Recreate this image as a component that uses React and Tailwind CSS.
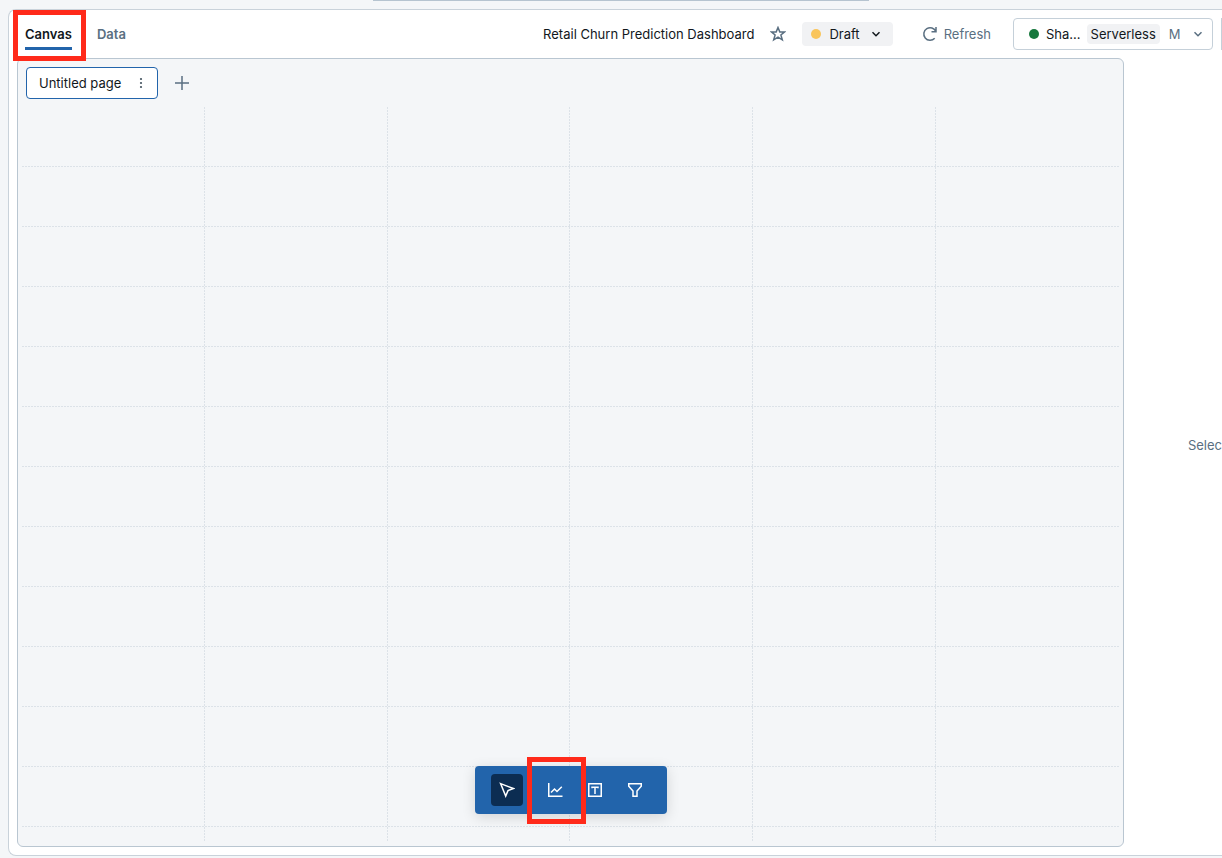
const columns = [0, 1, 2, 3, 4];
const rows = [0, 1, 2, 3, 4, 5, 6, 7, 8, 9, 10, 11];

function ChevronIcon() {
  return (
    <svg width="16" height="16" viewBox="0 0 16 16" fill="none" stroke="currentColor" strokeWidth="1.5" aria-hidden="true">
      <path d="M4.5 6.3 8 9.8l3.5-3.5" />
    </svg>
  );
}

function StarIcon() {
  return (
    <svg width="16" height="16" viewBox="0 0 16 16" fill="none" stroke="currentColor" strokeWidth="1.5" aria-hidden="true">
      <path d="M8 1.5 9.8 5.9h4.8l-3.7 3.1 1.4 4.9L8 11.1l-4.3 2.8 1.4-4.9-3.7-3.1h4.8z" />
    </svg>
  );
}

function RefreshIcon() {
  return (
    <svg width="16" height="16" viewBox="0 0 16 16" fill="none" stroke="currentColor" strokeWidth="1.5" aria-hidden="true">
      <path d="M14 1v4.8H9.5M13.9 5.5A6.3 6.3 0 1 0 12.7 12.3" />
    </svg>
  );
}

function CursorIcon() {
  return (
    <svg width="16" height="16" viewBox="0 0 16 16" fill="none" stroke="currentColor" strokeWidth="1.5" aria-hidden="true">
      <path d="M1.6 1.6 14.4 6.5 9 8.6 6.7 14z" />
    </svg>
  );
}

function ChartIcon() {
  return (
    <svg width="16" height="16" viewBox="0 0 16 16" fill="none" stroke="currentColor" strokeWidth="1.5" aria-hidden="true">
      <path d="M1.75 1v13.25H15.5M4 10.5 7.5 7l2.5 2.5 4.8-4.8" />
    </svg>
  );
}

function TextBoxIcon() {
  return (
    <svg width="16" height="16" viewBox="0 0 16 16" fill="none" stroke="currentColor" strokeWidth="1.5" aria-hidden="true">
      <path d="M1.75 1.75h12.5v12.5H1.75zM5 6.3V5.25h6V6.3M8 5.25V12" />
    </svg>
  );
}

function FilterIcon() {
  return (
    <svg width="16" height="16" viewBox="0 0 16 16" fill="none" stroke="currentColor" strokeWidth="1.5" aria-hidden="true">
      <path d="M1.75 1.75h12.5v2.5L10 9v5.25H6V9L1.75 4.25z" />
    </svg>
  );
}

function Header() {
  return (
    <header className="flex h-12 shrink-0 items-center pl-4">
      <nav className="relative z-10 flex gap-[25px] font-semibold">
        <a href="#canvas" className="border-b-3 border-[#2264ab] pt-[6px] pb-[3px] text-[#11171c]">Canvas</a>
        <a href="#data" className="pt-[6px] text-[#5a6f81]">Data</a>
        <span className="pointer-events-none absolute -top-2 -left-3 h-[51px] w-[73px] border-5 border-[#ff2a1a]" />
      </nav>
      <div className="ml-auto flex shrink-0 items-center">
        <h1 className="text-[#11171c]">Retail Churn Prediction Dashboard</h1>
        <button type="button" aria-label="Favorite" className="ml-4 text-[#5a6f81]"><StarIcon /></button>
        <button type="button" className="ml-4 flex h-6 items-center rounded bg-[#f1f2f4] px-[9px] text-[#11171c]">
          <span className="mr-2 size-[10px] rounded-full bg-[#f9c55c]" />
          Draft
          <span className="ml-2"><ChevronIcon /></span>
        </button>
        <button type="button" className="ml-[29px] flex items-center gap-[6px] text-[#5a6f81]">
          <RefreshIcon />
          Refresh
        </button>
        <button type="button" className="ml-[22px] flex h-8 w-[200px] items-center rounded border border-[#c5d0d9] pl-[15px] text-[#11171c]">
          <span className="mr-[7px] size-[10px] rounded-full bg-[#17783d]" />
          Sha...
          <span className="ml-[6px] rounded bg-[#f1f2f4] px-1 leading-5">Serverless</span>
          <span className="ml-[9px] text-[#5a6f81]">M</span>
          <span className="mr-[6px] ml-auto text-[#5a6f81]"><ChevronIcon /></span>
        </button>
        <span className="ml-2 h-8 w-px bg-[#c5d0d9]" />
      </div>
    </header>
  );
}

function PageTabs() {
  return (
    <div className="flex items-center gap-4 pt-2 pl-2">
      <div className="flex h-8 w-[132px] items-center justify-between rounded border border-[#2264ab] bg-white pr-2 pl-3 text-[#11171c]">
        <button type="button">Untitled page</button>
        <button type="button" aria-label="Page options" className="text-[#44535f]">
          <svg width="16" height="16" viewBox="0 0 16 16" fill="currentColor" aria-hidden="true">
            <circle cx="8" cy="4" r="1.1" />
            <circle cx="8" cy="8" r="1.1" />
            <circle cx="8" cy="12" r="1.1" />
          </svg>
        </button>
      </div>
      <button type="button" aria-label="Add page" className="text-[#5a6f81]">
        <svg width="16" height="16" viewBox="0 0 16 16" fill="none" stroke="currentColor" strokeWidth="1.5" aria-hidden="true">
          <path d="M8 1v14M1 8h14" />
        </svg>
      </button>
    </div>
  );
}

function Toolbar() {
  return (
    <div className="absolute bottom-8 left-1/2 flex h-12 w-48 -translate-x-1/2 items-center rounded bg-[#2264ab] pl-4 text-white shadow-[0_3px_14px_rgba(0,0,0,0.14)]">
      <button type="button" aria-label="Select" className="flex size-8 items-center justify-center rounded bg-[#0c2d52]"><CursorIcon /></button>
      <button type="button" aria-label="Add visualization" className="relative ml-4 flex size-8 items-center justify-center">
        <ChartIcon />
        <span className="pointer-events-none absolute -top-[17px] -left-3 z-10 h-[67px] w-[59px] border-5 border-[#ff2a1a]" />
      </button>
      <button type="button" aria-label="Add text box" className="ml-2 flex size-8 items-center justify-center"><TextBoxIcon /></button>
      <button type="button" aria-label="Add filter" className="ml-2 flex size-8 items-center justify-center"><FilterIcon /></button>
    </div>
  );
}

export default function App() {
  return (
    <div className="flex min-h-screen flex-col overflow-hidden bg-[#f4f6f8] font-['Inter',sans-serif] text-[13px] leading-5">
      <div className="flex h-[9px] shrink-0 justify-center pl-5">
        <div className="h-px w-[496px] max-w-full bg-[#b6c4d0]" />
      </div>
      <div className="mb-[2px] ml-2 flex grow flex-col rounded-l-lg border border-r-0 border-[#c9d2da] bg-white">
        <Header />
        <div className="flex grow">
          <main className="relative mb-2 ml-2 flex min-w-0 grow flex-col rounded-md border border-[#b9c6d1] bg-[#f4f6f8]">
            <PageTabs />
            <div className="relative mx-1 mt-2 mb-[5px] grow">
              {rows.map((row) => (
                <div key={row} className="flex h-15 items-end">
                  <div className="h-px grow bg-[repeating-linear-gradient(90deg,#dce2e8_0px_2px,transparent_2px_3px)]" />
                </div>
              ))}
              <div className="absolute inset-0 grid grid-cols-6">
                {columns.map((column) => (
                  <div key={column} className="flex justify-end">
                    <div className="w-px bg-[repeating-linear-gradient(180deg,#dce2e8_0px_2px,transparent_2px_3px)]" />
                  </div>
                ))}
              </div>
            </div>
            <Toolbar />
          </main>
          <aside className="flex w-[98px] shrink-0 items-center justify-end overflow-hidden text-[#5a6f81]">
            <p className="mb-6">Selec</p>
          </aside>
        </div>
      </div>
    </div>
  );
}
